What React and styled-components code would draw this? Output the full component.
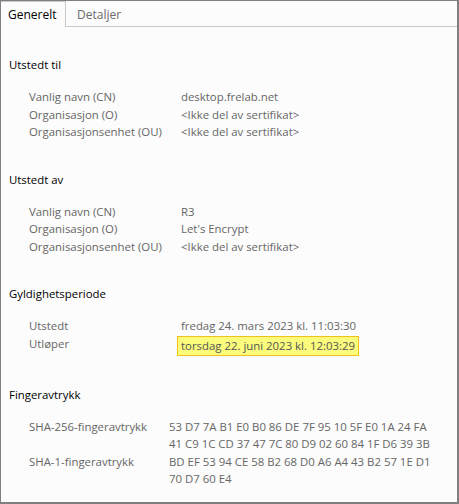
import React from 'react';
import styled, { createGlobalStyle } from 'styled-components';

const GlobalStyle = createGlobalStyle`
  html, body {
    margin: 0;
    padding: 0;
    background: #fcfcfc;
  }
  body {
    font-family: "Open Sans", "Noto Sans", Arial, sans-serif;
    font-size: 11.4px;
  }
`;

const Frame = styled.div`
  box-sizing: border-box;
  width: 459px;
  height: 504px;
  background: #fcfcfc;
  border: 1px solid #7f7f7f;
  border-right-width: 2px;
  border-bottom-width: 2px;
  display: flex;
  flex-direction: column;
  overflow: hidden;
`;

const TabBar = styled.div`
  display: flex;
  align-items: flex-end;
  height: 27px;
  border-bottom: 1px solid #c9c9c9;
`;

const Tab = styled.div`
  box-sizing: border-box;
  height: ${({ active }) => (active ? '26px' : '24px')};
  padding: 0 ${({ active }) => (active ? '7px' : '11px')};
  margin-bottom: ${({ active }) => (active ? '-1px' : '0')};
  display: flex;
  align-items: center;
  color: ${({ active }) => (active ? '#000' : '#6b6b6b')};
  background: #fcfcfc;
  border: ${({ active }) => (active ? '1px solid #c9c9c9' : 'none')};
  border-left: none;
  border-bottom: none;
  width: ${({ active }) => (active ? '65px' : 'auto')};
  font-size: 12px;
`;

const Content = styled.div`
  padding: 30px 0 0 8px;
  display: flex;
  flex-direction: column;
`;

const Section = styled.section`
  margin-bottom: 31px;
`;

const Heading = styled.div`
  line-height: 16px;
  color: #000;
  margin-bottom: 15px;
`;

const Table = styled.div`
  display: grid;
  grid-template-columns: ${({ labelWidth }) => labelWidth}px 1fr;
  padding-left: 20px;
  line-height: 17.5px;
  color: #666;
`;

const Label = styled.div`
  white-space: nowrap;
`;

const Value = styled.div`
  white-space: nowrap;
`;

const Highlight = styled.span`
  display: inline-block;
  line-height: 16px;
  padding: 1px 3px;
  margin: 1px 0 0 -4px;
  background: #fbfb7c;
  border: 1px solid #f2c21a;
  color: #555;
`;

const sections = [
  {
    title: 'Utstedt til',
    labelWidth: 152,
    rows: [
      ['Vanlig navn (CN)', 'desktop.frelab.net'],
      ['Organisasjon (O)', '<Ikke del av sertifikat>'],
      ['Organisasjonsenhet (OU)', '<Ikke del av sertifikat>'],
    ],
  },
  {
    title: 'Utstedt av',
    labelWidth: 152,
    rows: [
      ['Vanlig navn (CN)', 'R3'],
      ['Organisasjon (O)', "Let's Encrypt"],
      ['Organisasjonsenhet (OU)', '<Ikke del av sertifikat>'],
    ],
  },
  {
    title: 'Gyldighetsperiode',
    labelWidth: 152,
    rows: [
      ['Utstedt', 'fredag 24. mars 2023 kl. 11:03:30'],
      ['Utløper', 'torsdag 22. juni 2023 kl. 12:03:29', true],
    ],
  },
  {
    title: 'Fingeravtrykk',
    labelWidth: 140,
    rows: [
      ['SHA-256-fingeravtrykk', '53 D7 7A B1 E0 B0 86 DE 7F 95 10 5F E0 1A 24 FA'],
      ['', '41 C9 1C CD 37 47 7C 80 D9 02 60 84 1F D6 39 3B'],
      ['SHA-1-fingeravtrykk', 'BD EF 53 94 CE 58 B2 68 D0 A6 A4 43 B2 57 1E D1'],
      ['', '70 D7 60 E4'],
    ],
  },
];

const App = () => (
  <>
    <GlobalStyle />
    <Frame>
      <TabBar>
        <Tab active>Generelt</Tab>
        <Tab>Detaljer</Tab>
      </TabBar>
      <Content>
        {sections.map(section => (
          <Section key={section.title}>
            <Heading>{section.title}</Heading>
            <Table labelWidth={section.labelWidth}>
              {section.rows.map(([label, value, marked], i) => (
                <React.Fragment key={`${section.title}-${i}`}>
                  <Label>{label}</Label>
                  <Value>{marked ? <Highlight>{value}</Highlight> : value}</Value>
                </React.Fragment>
              ))}
            </Table>
          </Section>
        ))}
      </Content>
    </Frame>
  </>
);

export default App;
